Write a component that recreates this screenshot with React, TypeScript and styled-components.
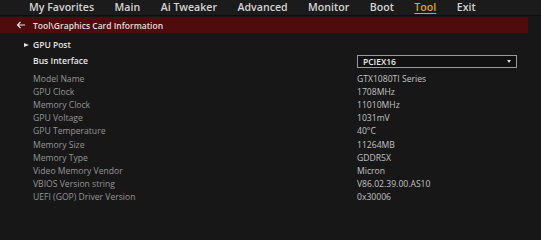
import React from "react";
import styled, { createGlobalStyle } from "styled-components";

const Global = createGlobalStyle`
  html, body { margin: 0; padding: 0; background: #171717; }
  body { font-family: "Open Sans", "DejaVu Sans", sans-serif; }
`;

const Page = styled.div`
  width: 541px;
  height: 240px;
  background: #171717;
  overflow: hidden;
  display: flex;
  flex-direction: column;
`;

const TopBar = styled.div`
  height: 15px;
  display: flex;
  align-items: center;
  padding-left: 29px;
  gap: 20.5px;
  background: #1b1b1b;
  border-bottom: 1px solid #0e0e0e;
`;

const Tab = styled.span<{ $active?: boolean }>`
  font-size: 10.6px;
  font-weight: 600;
  line-height: 15px;
  color: ${(p) => (p.$active ? "#d9a62b" : "#d4d4d4")};
  text-decoration: ${(p) => (p.$active ? "underline" : "none")};
  text-underline-offset: 2px;
`;

const Crumb = styled.div`
  margin-top: 1px;
  height: 16px;
  width: 528px;
  background: #4e0c0c;
  display: flex;
  align-items: center;
  padding-left: 16px;
  box-sizing: border-box;
  gap: 7px;
  color: #e4dede;
  font-size: 8.5px;
  font-weight: 600;
`;

const Content = styled.div`
  display: flex;
  flex-direction: column;
  padding-left: 33px;
  padding-top: 5px;
`;

const SubItem = styled.div`
  position: relative;
  height: 13px;
  display: flex;
  align-items: center;
  font-size: 8.5px;
  font-weight: 600;
  color: #e2e2e2;
`;

const Tri = styled.span`
  position: absolute;
  left: -9px;
  width: 0;
  height: 0;
  border-top: 2.5px solid transparent;
  border-bottom: 2.5px solid transparent;
  border-left: 5px solid #e2e2e2;
`;

const Row = styled.div<{ $h?: number; $mb?: number }>`
  display: grid;
  grid-template-columns: 324px 160px;
  align-items: center;
  height: ${(p) => p.$h ?? 13.1}px;
  margin-bottom: ${(p) => p.$mb ?? 0}px;
  font-size: 8.6px;
`;

const Label = styled.span<{ $strong?: boolean }>`
  color: ${(p) => (p.$strong ? "#e6e6e6" : "#959595")};
  font-weight: ${(p) => (p.$strong ? 600 : 400)};
`;

const Value = styled.span`
  color: #c2c2c2;
`;

const Select = styled.div`
  height: 11px;
  border: 1px solid #9a9a9a;
  background: #111;
  display: flex;
  align-items: center;
  justify-content: space-between;
  padding: 0 5px;
  color: #ececec;
  font-weight: 600;
  font-size: 8.5px;
`;

const Caret = styled.span`
  width: 0;
  height: 0;
  border-left: 2.5px solid transparent;
  border-right: 2.5px solid transparent;
  border-top: 3px solid #dcdcdc;
`;

const tabs = ["My Favorites", "Main", "Ai Tweaker", "Advanced", "Monitor", "Boot", "Tool", "Exit"];

const rows: [string, string][] = [
  ["Model Name", "GTX1080TI Series"],
  ["GPU Clock", "1708MHz"],
  ["Memory Clock", "11010MHz"],
  ["GPU Voltage", "1031mV"],
  ["GPU Temperature", "40°C"],
  ["Memory Size", "11264MB"],
  ["Memory Type", "GDDR5X"],
  ["Video Memory Vendor", "Micron"],
  ["VBIOS Version string", "V86.02.39.00.AS10"],
  ["UEFI (GOP) Driver Version", "0x30006"],
];

export default function App() {
  return (
    <Page>
      <Global />
      <TopBar>
        {tabs.map((t) => (
          <Tab key={t} $active={t === "Tool"}>
            {t}
          </Tab>
        ))}
      </TopBar>
      <Crumb>
        <svg width="10" height="8" viewBox="0 0 10 8">
          <path d="M9 4H1.5M4.5 1L1.5 4l3 3" stroke="#e4dede" strokeWidth="1.1" fill="none" />
        </svg>
        <span>Tool\Graphics Card Information</span>
      </Crumb>
      <Content>
        <SubItem>
          <Tri />
          GPU Post
        </SubItem>
        <Row $h={20} $mb={1.5}>
          <Label $strong>Bus Interface</Label>
          <Select>
            <span>PCIEX16</span>
            <Caret />
          </Select>
        </Row>
        {rows.map(([l, v]) => (
          <Row key={l}>
            <Label>{l}</Label>
            <Value>{v}</Value>
          </Row>
        ))}
      </Content>
    </Page>
  );
}
